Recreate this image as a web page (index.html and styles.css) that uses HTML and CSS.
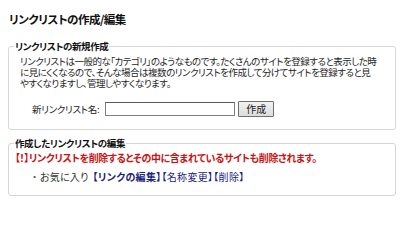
FILE: index.html
```html
<!DOCTYPE html>
<html lang="ja">
<head>
<meta charset="utf-8">
<title>リンクリストの作成/編集</title>
<link rel="stylesheet" href="styles.css">
</head>
<body>
<h1 class="title">リンクリストの作成/編集</h1>

<fieldset class="box box-new">
  <legend class="box-legend">リンクリストの新規作成</legend>
  <p class="desc">リンクリストは一般的な「カテゴリ」のようなものです。たくさんのサイトを登録すると表示した時<br>に見にくくなるので、そんな場合は複数のリンクリストを作成して分けてサイトを登録すると見<br>やすくなりますし、管理しやすくなります。</p>
  <form class="create-row">
    <label class="create-label" for="newname">新リンクリスト名:</label>
    <input class="create-input" id="newname" type="text">
    <button class="create-btn" type="button">作成</button>
  </form>
</fieldset>

<fieldset class="box box-edit">
  <legend class="box-legend">作成したリンクリストの編集</legend>
  <p class="warn">【！】リンクリストを削除するとその中に含まれているサイトも削除されます。</p>
  <ul class="lists">
    <li class="list-item"><span class="dot">・</span><span class="list-name">お気に入り</span><a class="act act-strong" href="#">【リンクの編集】</a><a class="act" href="#">【名称変更】</a><a class="act" href="#">【削除】</a></li>
  </ul>
</fieldset>
</body>
</html>
```

FILE: styles.css
```css
html, body {
  background: #ffffff;
}
body {
  margin: 0;
  padding: 12px 4px 0 8px;
  font-family: "Noto Sans CJK JP", "Noto Sans", sans-serif;
  font-feature-settings: "palt";
  color: #222222;
  font-size: 10px;
}
.title {
  margin: 0 0 14px 1px;
  font-size: 11.5px;
  line-height: 14px;
  letter-spacing: -0.5px;
  font-weight: bold;
  color: #111111;
}
.box {
  margin: 0;
  border: 1px solid #d6d6d6;
  border-radius: 3px;
  padding: 0 6px 0 5px;
}
.box-legend {
  padding: 0 1px;
  font-size: 9.5px;
  line-height: 13px;
  letter-spacing: -0.4px;
  font-weight: bold;
  color: #111111;
}
.box-new {
  padding-top: 3px;
  padding-bottom: 12px;
}
.desc {
  margin: 0 0 0 6px;
  font-size: 9.5px;
  line-height: 11px;
  letter-spacing: -0.5px;
  white-space: nowrap;
  color: #262626;
}
.create-row {
  display: flex;
  align-items: center;
  margin: 12px 0 0 18px;
}
.create-label {
  white-space: nowrap;
  margin-right: 6px;
  font-size: 9.5px;
  letter-spacing: -0.3px;
}
.create-input {
  box-sizing: border-box;
  width: 130px;
  height: 14px;
  margin: 0;
  padding: 0 2px;
  border: 1px solid #7f7f7f;
  border-top-color: #5a5a5a;
  background: #ffffff;
}
.create-btn {
  box-sizing: border-box;
  width: 36px;
  height: 16px;
  margin: 0 0 0 3px;
  padding: 0;
  border: 1px solid #707070;
  border-radius: 1px;
  background: linear-gradient(#f2f2f2, #dcdcdc);
  font-family: inherit;
  font-feature-settings: "palt";
  font-size: 10px;
  line-height: 14px;
  color: #222222;
}
.box-edit {
  margin-top: 7px;
  padding-top: 2px;
  padding-bottom: 12px;
}
.warn {
  margin: 0 0 0 1px;
  font-size: 10px;
  line-height: 12px;
  letter-spacing: -0.4px;
  font-weight: bold;
  color: #cc1111;
}
.lists {
  list-style: none;
  margin: 7px 0 0 18px;
  padding: 0;
}
.list-item {
  line-height: 12px;
  display: flex;
  align-items: center;
  font-size: 10px;
}
.dot {
  color: #555555;
  margin-right: 3px;
}
.list-name {
  color: #333333;
  margin-right: 4px;
  letter-spacing: 0.2px;
}
.act {
  color: #1a237e;
  text-decoration: none;
  letter-spacing: 0.3px;
}
.act-strong {
  font-weight: bold;
}
```
